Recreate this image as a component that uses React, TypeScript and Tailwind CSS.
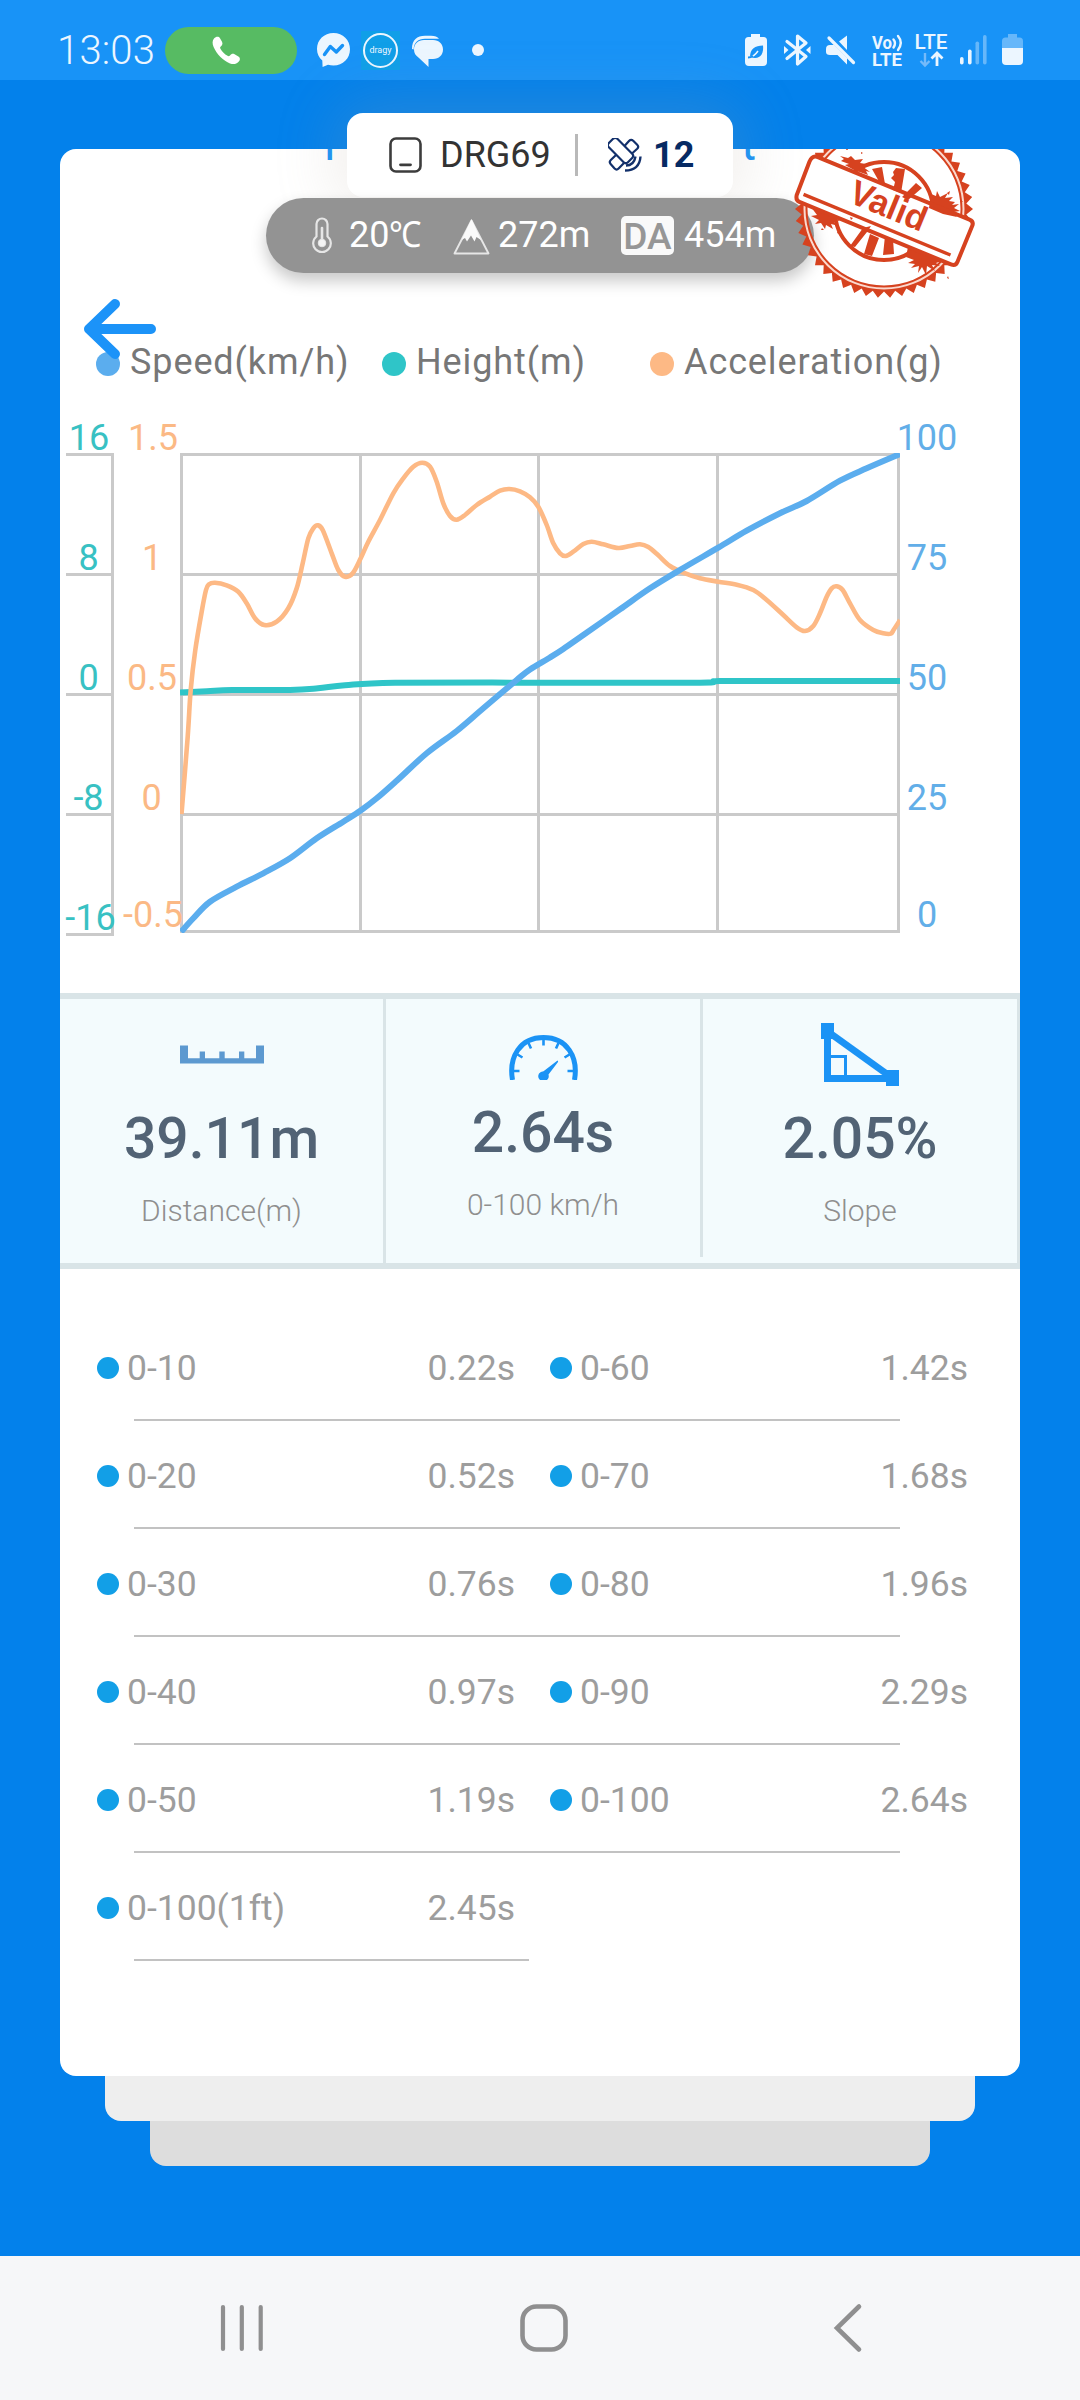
import type { ReactNode } from 'react';

type Point = [number, number];

const speedPoints: Point[] = [
    [181, 932], [193.3, 918.3], [210, 901.7], [236.7, 886.7], [263.3, 873.3], [290, 858.3], [316.7, 838.3],
    [343.3, 821.7], [360.7, 810.5], [376.7, 798.3], [396.7, 780.7], [426.7, 753.3], [456.7, 731], [483.3, 708.3],
    [516.7, 680], [530, 669.5], [550, 657.5], [563.3, 649], [583.3, 635], [620, 609.3], [650, 588.3], [683.3, 568],
    [718.3, 547.7], [746.7, 530.7], [780, 513.3], [806.7, 501], [840, 480.7], [866.7, 468.3], [900, 454]
];

const heightPoints: Point[] = [
    [180, 692.5], [207, 691.3], [232, 690], [290, 690], [318, 688.3], [345, 685.3], [395, 682.7], [550, 682.7],
    [700, 682.7], [720, 681], [810, 681], [900, 681]
];

const accelPoints: Point[] = [
    [181.5, 814], [187.7, 736.7], [190.7, 690], [195.3, 650], [202, 610], [206, 590], [208.7, 584.5], [215, 582.7],
    [226.7, 585.3], [238.3, 591.7], [246.7, 603.3], [255, 618.3], [264.3, 625], [276.7, 621.7], [288.3, 608.3],
    [296.7, 588.3], [302.7, 563.3], [308.3, 538.3], [313.3, 528.3], [317.7, 525.3], [322.7, 530], [331.7, 553.3],
    [338.3, 570], [345, 576.7], [352.7, 573.3], [360.7, 558.3], [368.3, 541.7], [380, 520], [393.3, 493.3],
    [403.3, 478.3], [413.3, 466.7], [422.3, 462.7], [430, 466.7], [436.7, 481.7], [443.3, 503.3], [450, 516],
    [456.7, 519.7], [465, 515], [476.7, 505], [490, 496.7], [500, 490.7], [509.3, 489], [520, 491.3], [530, 497.3],
    [538.3, 506.7], [546.7, 525], [553.3, 543.3], [560, 553.3], [565.7, 556], [573.3, 551.7], [583.3, 544],
    [591.7, 541.7], [603.3, 544.3], [618.3, 548], [630, 546], [640, 544.3], [648.3, 547], [658.3, 555.3], [670, 566],
    [683.3, 572.7], [700, 578.3], [718.3, 581.7], [736.7, 584.7], [753.3, 590], [766.7, 600], [783.3, 615],
    [796.7, 627.3], [805, 631], [813.3, 626], [820, 613.3], [826.7, 596.7], [831.7, 588.3], [836.7, 586.3],
    [842.7, 590], [850, 603.3], [860, 620], [873.3, 630], [883.3, 633.3], [890.7, 633.7], [894, 629.3], [900, 620]
];

const heightTicks = [['16', 89, 450], ['8', 88.5, 570], ['0', 88.5, 690], ['-8', 88.5, 810], ['-16', 90.5, 930]] as const;
const accelTicks = [['1.5', 153, 450], ['1', 152, 570], ['0.5', 152, 690], ['0', 151.5, 810], ['-0.5', 153, 927]] as const;
const speedTicks = [['100', 450], ['75', 570], ['50', 690], ['25', 810], ['0', 927]] as const;

const splits = [
    [['0-10', '0.22s'], ['0-60', '1.42s']],
    [['0-20', '0.52s'], ['0-70', '1.68s']],
    [['0-30', '0.76s'], ['0-80', '1.96s']],
    [['0-40', '0.97s'], ['0-90', '2.29s']],
    [['0-50', '1.19s'], ['0-100', '2.64s']],
    [['0-100(1ft)', '2.45s']]
];

// Catmull-Rom spline through all samples
function spline(p: Point[]) {
    let d = `M${p[0][0]} ${p[0][1]}`;
    for (let i = 0; i < p.length - 1; i++) {
        const a = p[i - 1] ?? p[i];
        const b = p[i];
        const c = p[i + 1];
        const e = p[i + 2] ?? c;
        d += `C${b[0] + (c[0] - a[0]) / 6} ${b[1] + (c[1] - a[1]) / 6} ${c[0] - (e[0] - b[0]) / 6} ${c[1] - (e[1] - b[1]) / 6} ${c[0]} ${c[1]}`;
    }
    return d;
}

// Toothed outer edge of the stamp
function teeth(cx: number, cy: number, inner: number, outer: number, count: number) {
    const pts: string[] = [];
    for (let i = 0; i < count * 2; i++) {
        const r = i % 2 ? inner : outer;
        const a = (i * Math.PI) / count;
        pts.push(`${(cx + r * Math.cos(a)).toFixed(1)} ${(cy + r * Math.sin(a)).toFixed(1)}`);
    }
    return `M${pts.join('L')}Z`;
}

function ring(cx: number, cy: number, r: number) {
    return `M${cx - r} ${cy}a${r} ${r} 0 1 0 ${r * 2} 0a${r} ${r} 0 1 0 ${-r * 2} 0Z`;
}

function StatusBar() {
    return (
        <div className="flex h-20 items-center bg-[#1893f7] pt-5 pl-[57px] text-[#ecf6ff]">
            <span className="w-[108px] pt-[2px] text-[40px] leading-none font-light tracking-[0.2px]">13:03</span>
            <div className="flex h-[47px] w-[132px] items-center justify-center rounded-full bg-[#57bb63]">
                <svg className="mr-[10px] h-[29px] w-[29px]" viewBox="0 0 29 29" fill="white">
                    <path d="M2 2.6C4 .3 6.700 .2 8 2.200l2 3.600c1 2 .3 3.400-1.200 4.600-.9.8-.8 1.500-.2 2.500 1.500 2.700 4 5.300 6.900 6.900 1 .6 1.700.5 2.500-.4 1.200-1.500 2.700-2.200 4.600-1.200l3.800 2.300c2 1.300 2 3.500.2 5.300-2.300 2.400-5.200 2.900-8.600 1.600C11.600 25 4.500 18 1.600 11 .2 7.600.2 4.800 2 2.600Z" />
                </svg>
            </div>
            <svg className="ml-[19px] h-[36px] w-[35px]" viewBox="0 0 35 36">
                <path fill="#ecf6ff" d="M17.500 1C8 1 1 7.800 1 17c0 4.800 2 8.700 5.300 11.500l.3 6.500 5.400-2.200c1.700.5 3.600.8 5.500.8C27 33.600 34 26.500 34 17.300S27 1 17.500 1Z" />
                <path fill="none" stroke="#1893f7" strokeWidth="3.400" strokeLinejoin="round" strokeLinecap="round" d="M8.500 22.500 14.300 14.500l6 5.500L26.500 13.500" />
            </svg>
            <div className="ml-[10px] flex h-[39px] w-[39px] items-center justify-center bg-[#109fe8]">
                <div className="flex h-[35px] w-[35px] items-center justify-center rounded-full border-2 border-[#ecf6ff] text-[9px] leading-none">dragy</div>
            </div>
            <svg className="mt-[2px] ml-[11px] h-[33px] w-[33px]" viewBox="0 0 33 33" fill="#ecf6ff">
                <path d="M1 14C1 5 6 .8 14 .8h6c4 0 6.500 1 8 3H14C7 3.800 3 7.500 2.600 14.500Z" />
                <path d="M13 5h9c6 0 10 4 10 9.500S28 24 22 24h-4.500v8L8 23C4.500 20.500 3 18 3 14.500 3 9 7 5 13 5Z" />
            </svg>
            <div className="ml-[28px] h-3 w-3 rounded-full bg-[#ecf6ff]" />
            <StatusIcons />
        </div>
    );
}

function StatusIcons() {
    return (
        <svg className="mr-[50px] ml-auto h-[60px] w-[290px]" viewBox="740 20 290 60" fill="#ecf6ff">
            <path d="M751 34h9v3h3.500q3.500 0 3.500 3.500V62q0 4-4 4h-14q-4 0-4-4V40.500q0-3.500 3.500-3.500h2.500Z" />
            <path d="M750 57C750 49 755 45.500 763 45.500c.8 7.500-2 12.500-8 12.500q-2.500 0-5-1Z" fill="#1893f7" />
            <path d="M748 58q6-1 10-7" fill="none" stroke="#ecf6ff" strokeWidth="1.500" />
            <path d="M748 57.500q3 0 5-1.500" fill="none" stroke="#1893f7" strokeWidth="1.800" />
            <g fill="none" stroke="#ecf6ff" strokeWidth="3.200" strokeLinejoin="round" strokeLinecap="round">
                <path d="M787 41.500 806 56.500 797.500 64V36l8.500 7L787 58.500" />
            </g>
            <path d="m784 46 4.500 4-4.500 4ZM810.500 46l-4.500 4 4.500 4Z" />
            <path d="M839 41.500 847 35.500V50ZM826 49q0-4 4-4h4L847 58v6.500L837.500 55H830q-4 0-4-3Z" />
            <path d="M829 38 853.500 62.500" stroke="#ecf6ff" strokeWidth="3.200" strokeLinecap="round" />
            <text x="872" y="48.500" fontSize="17.500" fontWeight="700" textLength="20" lengthAdjust="spacingAndGlyphs">Vo</text>
            <path d="M893.500 39.500q3 3.500 0 8M898 36q5.500 6.500 0 14" fill="none" stroke="#ecf6ff" strokeWidth="2.400" strokeLinecap="round" />
            <text x="872" y="65.500" fontSize="18" fontWeight="700" textLength="30" lengthAdjust="spacingAndGlyphs">LTE</text>
            <text x="914.500" y="48.800" fontSize="20.500" fontWeight="500" textLength="33" lengthAdjust="spacingAndGlyphs">LTE</text>
            <path d="M925 53v12.500M920.500 61l4.500 4.500 4.500-4.500" fill="none" stroke="#74bafa" strokeWidth="2.400" />
            <path d="M937 66V53.500M931.500 58.500l5.500-5.500 5.500 5.500" fill="none" stroke="#ecf6ff" strokeWidth="2.800" />
            <rect x="960" y="57" width="3.600" height="7.500" rx="1.800" />
            <rect x="968" y="49.500" width="3.600" height="15" rx="1.800" />
            <rect x="975.500" y="41.500" width="3.600" height="23" rx="1.800" fill="#66b7fa" />
            <rect x="983" y="35" width="3.600" height="29.500" rx="1.800" fill="#66b7fa" />
            <path d="M1008 34h9v3.500h2.500q3.500 0 3.500 3.500v7h-21v-7q0-3.500 3.500-3.500h2.500Z" fill="#66b7fa" />
            <path d="M1002 48h21v13q0 4-4 4h-13q-4 0-4-4Z" />
        </svg>
    );
}

function DevicePopup() {
    return (
        <div className="absolute top-[113px] left-[347px] flex h-[84px] w-[386px] items-center rounded-[16px] bg-white pl-[42px] shadow-[0_0_64px_10px_rgba(180,165,150,0.2)]">
            <svg className="h-[36px] w-[33px]" viewBox="0 0 33 36" fill="none" stroke="#3c3c3c">
                <rect x="1.500" y="1.500" width="30" height="33" rx="5.500" strokeWidth="2.600" />
                <path d="M11.500 27.800h10" strokeWidth="2.800" strokeLinecap="round" />
            </svg>
            <span className="ml-[18px] w-[135px] text-[36px] leading-none text-[#333]">DRG69</span>
            <div className="h-[42px] w-[3px] bg-[#b9b9b9]" />
            {/* Satellite */}
            <svg className="ml-[30px] h-[34px] w-[34px]" viewBox="0 0 34 34" fill="none" stroke="#12306b" strokeWidth="2.200" strokeLinejoin="round">
                <rect x="-6" y="-13.500" width="12" height="27" rx="3" transform="translate(12.500 12.500) rotate(-45)" />
                <path d="m16.500 8 4.700-5.200q2-2 4 0l4 4q2 2 0 4L24 15.500M8 17 2.800 22q-2 2-.2 4l4 4.500q2 2 4 0L16 25" />
                <path d="M18 27.500q8 0 9.500-9M17 32.500Q31.500 32.500 32.500 18.500" strokeWidth="2.400" />
            </svg>
            <span className="ml-[11px] text-[36px] leading-none font-bold text-[#062a63]">12</span>
        </div>
    );
}

function WeatherPill() {
    return (
        <div className="absolute top-[198px] left-[266px] flex h-[75px] w-[548px] items-center rounded-full bg-[#939393] pb-[1px] pl-[45px] text-[36px] leading-none text-white shadow-[0_8px_16px_rgba(0,0,0,0.22)]">
            <svg className="h-[36px] w-[22px]" viewBox="0 0 22 36" fill="none" stroke="#e6e6e6">
                <path d="M5.500 19.500V7a5.500 5.500 0 0 1 11 0v12.500a8.800 8.800 0 1 1-11 0Z" strokeWidth="2.200" />
                <path d="M11 11v14" strokeWidth="2.600" strokeLinecap="round" />
                <circle cx="11" cy="26" r="3.800" fill="#f4f4f4" />
            </svg>
            <span className="ml-[16px] w-[104px]">
                20<span className="inline-block origin-left scale-x-90">℃</span>
            </span>
            <svg className="mt-[3px] h-[37px] w-[37px]" viewBox="0 0 37 37" fill="none">
                <path d="M18.500 2.500 35.500 35.500H1.500Z" stroke="#e6e6e6" strokeWidth="1.900" strokeLinejoin="round" />
                <path d="M18.500 1 28 22l-4.500-3-2 4.500-3.500-6-4 6-2-3.500-3.500 2Z" fill="#fafafa" />
            </svg>
            <span className="ml-[8px] w-[123px]">272m</span>
            <div className="mt-[1px] flex h-[39px] w-[53px] items-center justify-center rounded-[5px] bg-[#f9f9f9] text-[37px] leading-[39px] font-medium text-[#969696]">
                <span className="-mx-1 pt-[2px]">DA</span>
            </div>
            <span className="ml-[10px]">454m</span>
        </div>
    );
}

function ValidStamp() {
    return (
        <svg className="absolute top-[149px] left-[785px] h-[155px] w-[200px]" viewBox="785 149 200 155" fill="#d6421f">
            <clipPath id="stamp-top">
                <path d="M780 100H990V227.500L795 147.500V100Z" />
            </clipPath>
            <clipPath id="stamp-bottom">
                <path d="M780 310H990V281.500L780 195Z" />
            </clipPath>
            {['stamp-top', 'stamp-bottom'].map((id) => (
                <g key={id} clipPath={`url(#${id})`}>
                    <path fillRule="evenodd" d={teeth(884, 209, 82.5, 89, 46) + ring(884, 209, 76.5)} />
                    <circle cx="884" cy="209" r="79.500" fill="none" stroke="#fbd9ce" strokeWidth="2" />
                    <circle cx="884" cy="211" r="49" fill="none" stroke="#d6421f" strokeWidth="4" />
                </g>
            ))}
            {/* rays inside the inner circle */}
            <path d="M872 169l10-2 3 17-4 1Zm21 3 3-4 9 1-4 24-8-3 2-8-4-4 3-3Zm23 11 6 5-14 12-6-3Zm-52 71 6-20 9 4-7 18Zm19 1 2-19 8 3 1 15Zm-33-9 13-18 8-2-4 6-12 15Z" />
            {/* ink splatter along the banner */}
            <path d="m840 156 8 2 3-2 4 4 8-1-3 4 6 1-4 2 8 6-4-1 2 4-14-5-9-5 4-1-8-3 3-2Z" />
            <path d="m931 194 5 2 1-5 3 6 8-4-3 5 8-1-4 4 6 1-3 3 7-1-5 4 6 3-7 1 4 5-14-3-14-6Z" />
            <path d="m811 207 8 3 9 4 10 6-4 2 5 4-8-2 2 5-7-4-1 4-4-6-6 1 4-4-8-4 6-1Z" />
            <path d="m908 247 20 8 14 6-6 2 4 3-8-1 3 6-8-5-1 9-4-8-4 6 1-7-8 2 4-4-7-1 6-3-8-3Z" />
            <path d="m838 218 2 2-2 1Zm12-1 3 1-2 2Zm-3-69 1 2-2 0Zm14 4 2 1-2 1Zm86 41 3-2-1 4Zm13 8 3 0-2 2Zm-138 27 2 2-3 0Zm16 3 1 3-2-1Zm81 27 3 1-3 1Zm29 18 1 3-2-1Z" />
            <g transform="translate(884.500 210.500) rotate(22.400)">
                <path d="M-82-24H82q5 0 5 5V19.500q0 5-5 5H-82q-4 0-5-5l-1-36q0-7.500 6-7.500Z" fill="none" stroke="#d6421f" strokeWidth="4" />
                <path d="M-81 16H78" stroke="#d6421f" strokeWidth="3.400" />
                <text x="-38" y="6" className="font-['Liberation_Sans',sans-serif]" fontSize="35" fontWeight="700" textLength="80" lengthAdjust="spacingAndGlyphs">Valid</text>
            </g>
        </svg>
    );
}

function LegendItem({ dot, width, children }: { dot: string; width: string; children: ReactNode }) {
    return (
        <div className={`flex items-center gap-[10px] ${width}`}>
            <div className={`h-6 w-6 rounded-full ${dot}`} />
            <span className="-mt-[4px] tracking-[0.9px]">{children}</span>
        </div>
    );
}

function Chart() {
    return (
        <svg className="block h-[608px] w-[960px]" viewBox="60 385 960 608" fill="none" fontSize="36">
            <path
                stroke="#cacaca"
                strokeWidth="3"
                d="M66 454.500H112.500V934.500H66M66 574.500H112.500M66 694.500H112.500M66 814.500H112.500M181.500 454.500H898.500V931.500H181.500ZM181.500 574.500H898.500M181.500 694.500H898.500M181.500 814.500H898.500M360.500 454.500V931.500M538.500 454.500V931.500M717.500 454.500V931.500"
            />
            <g fill="#38c1c3" textAnchor="middle">
                {heightTicks.map(([label, x, y]) => <text key={y} x={x} y={y}>{label}</text>)}
            </g>
            <g fill="#fbb985" textAnchor="middle">
                {accelTicks.map(([label, x, y]) => <text key={y} x={x} y={y}>{label}</text>)}
            </g>
            <g fill="#62aee8" textAnchor="middle">
                {speedTicks.map(([label, y]) => <text key={y} x="927" y={y}>{label}</text>)}
            </g>
            <clipPath id="plot">
                <rect x="180" y="453" width="720" height="480" />
            </clipPath>
            <g clipPath="url(#plot)" strokeLinejoin="round">
                <path d={spline(heightPoints)} stroke="#2fc5c8" strokeWidth="6" />
                <path d={spline(accelPoints)} stroke="#fdb985" strokeWidth="4.600" />
                <path d={spline(speedPoints)} stroke="#5badee" strokeWidth="6" />
            </g>
        </svg>
    );
}

function Stat({ icon, value, label, className }: { icon: ReactNode; value: string; label: string; className: string }) {
    return (
        <div className={`flex flex-col items-center border-[#d9e4e7] ${className}`}>
            {icon}
            <span className="pt-[2px] text-[57px] leading-[68px] font-medium text-[#526375]">{value}</span>
            <span className="mt-[20px] text-[30px] leading-[36px] font-light text-[#8f8f8f]">{label}</span>
        </div>
    );
}

function Stats() {
    return (
        <div className="flex h-[276px] border-y-[6px] border-[#d9e4e7] bg-[#f3fbfd]">
            <Stat
                className="w-[326px] border-r-[3px]"
                value="39.11m"
                label="Distance(m)"
                icon={
                    <svg className="mt-[46px] mb-[39px] h-[19px] w-[84px]" viewBox="0 0 84 19" fill="#5c99d0">
                        <path d="M0 .5h8v12.800h11.700V6.500H25v6.800h14.300V6.500h5.400v6.800H59V6.500h5.300v6.800H76V.5h8v18H0Z" />
                    </svg>
                }
            />
            <Stat
                className="mb-[6px] w-[317px] border-r-[3px]"
                value="2.64s"
                label="0-100 km/h"
                icon={
                    <svg className="mt-[36px] mb-[17px] h-[45px] w-[69px]" viewBox="0 0 69 45">
                        <path
                            d="M3.500 45C-.5 22 11 2.600 34.500 2.600S69.500 22 65.500 45"
                            fill="none"
                            stroke="#1b93f5"
                            strokeWidth="5"
                        />
                        <path
                            d="M34.500 4v6.500M19.500 8l2.500 5.500M49.500 8 47 13.500M8.500 19.500l5 3M60.500 19.500l-5 3M4 36h6.500M65 36h-6.500"
                            stroke="#1b93f5"
                            strokeWidth="2.600"
                        />
                        <path d="M48.500 25.500q1 .7.500 1.600L39.500 39.500q1 3-1.500 5.500h-7q-3-3-1-6.500 1.500-2 4.500-2.200Z" fill="#1b93f5" />
                    </svg>
                }
            />
            <Stat
                className="w-[317px] border-r-[3px]"
                value="2.05%"
                label="Slope"
                icon={
                    <svg className="mt-[24px] mb-[17px] h-[63px] w-[78px]" viewBox="0 0 78 63" fill="none" stroke="#1b93f5">
                        <path d="M6.500 8V55.500H70" strokeWidth="7" />
                        <path d="M6 8 70 54" strokeWidth="7" />
                        <path d="M8 33.500h16.500V54" strokeWidth="3" />
                        <path d="M0 0h13v16H0ZM65 47h13v16H65Z" fill="#1b93f5" stroke="none" />
                    </svg>
                }
            />
        </div>
    );
}

function SplitList() {
    return (
        <div className="mt-[44px] text-[35.5px] leading-none text-[#9d9d9d]">
            {splits.map((row) => (
                <div key={row[0][0]} className="flex h-[108px] flex-col">
                    <div className="flex flex-1 items-center gap-[35px] pt-[4px] pl-[37px]">
                        {row.map(([label, time]) => (
                            <div key={label} className="flex w-[418px] items-center gap-[8px]">
                                <div className="h-[22px] w-[22px] rounded-full bg-[#129fe7]" />
                                <span className="pt-[2px]">{label}</span>
                                <span className="ml-auto pt-[2px]">{time}</span>
                            </div>
                        ))}
                    </div>
                    <div className={`ml-[74px] h-[2px] bg-[#c2c2c2] ${row.length > 1 ? 'w-[766px]' : 'w-[395px]'}`} />
                </div>
            ))}
        </div>
    );
}

function NavBar() {
    return (
        <div className="mt-auto flex h-36 items-center justify-between bg-[#f6f7f9] pr-[217px] pl-[219px]">
            <svg className="h-[48px] w-[46px]" viewBox="0 0 46 48" stroke="#8f8f90" strokeWidth="4.200" strokeLinecap="round">
                <path d="M4 3v42M22.800 3v42M41.700 3v42" />
            </svg>
            <svg className="-ml-[11px] h-[48px] w-[48px]" viewBox="0 0 48 48" fill="none" stroke="#8f8f90" strokeWidth="4.600">
                <rect x="2.500" y="2.500" width="43" height="43" rx="14" />
            </svg>
            <svg className="h-[50px] w-[30px]" viewBox="0 0 30 50" fill="none" stroke="#8f8f90" strokeWidth="4.600" strokeLinecap="round">
                <path d="M26 3.500 4 25 26 46.500" />
            </svg>
        </div>
    );
}

export default function App() {
    return (
        <div className="relative flex h-[2400px] w-[1080px] flex-col overflow-hidden bg-[#0381eb] font-[Roboto,sans-serif]">
            <StatusBar />

            <div className="mx-[60px] mt-[69px] h-[1927px] overflow-hidden rounded-[16px] bg-white">
                {/* Title, mostly hidden behind the device popup */}
                <div className="-mt-[31px] flex h-[52px] justify-between pr-[264px] pl-[256px] text-[46px] leading-[52px] text-[#1893f7]">
                    <span>T</span>
                    <span>t</span>
                </div>
                <div className="mt-[173px] flex h-[42px] pl-[36px] text-[36px] leading-[42px] text-[#777]">
                    <LegendItem dot="bg-[#5badee]" width="w-[286px]">Speed(km/h)</LegendItem>
                    <LegendItem dot="bg-[#2fc5c8]" width="w-[268px]">Height(m)</LegendItem>
                    <LegendItem dot="bg-[#fdb985]" width="w-[300px]">Acceleration(g)</LegendItem>
                </div>
                <Chart />
                <Stats />
                <SplitList />
            </div>
            <div className="mx-[105px] h-[45px] rounded-b-[16px] bg-[#eee]" />
            <div className="mx-[150px] h-[45px] rounded-b-[16px] bg-[#ddd]" />

            <NavBar />

            <DevicePopup />
            <WeatherPill />
            <ValidStamp />
            <svg className="absolute top-[298px] left-[82px] h-[62px] w-[75px]" viewBox="0 0 75 62" fill="none" stroke="#1c93f8" strokeWidth="10" strokeLinecap="round" strokeLinejoin="round">
                <path d="M69 31H7M33 6 7 31 33 56" />
            </svg>
        </div>
    );
}
